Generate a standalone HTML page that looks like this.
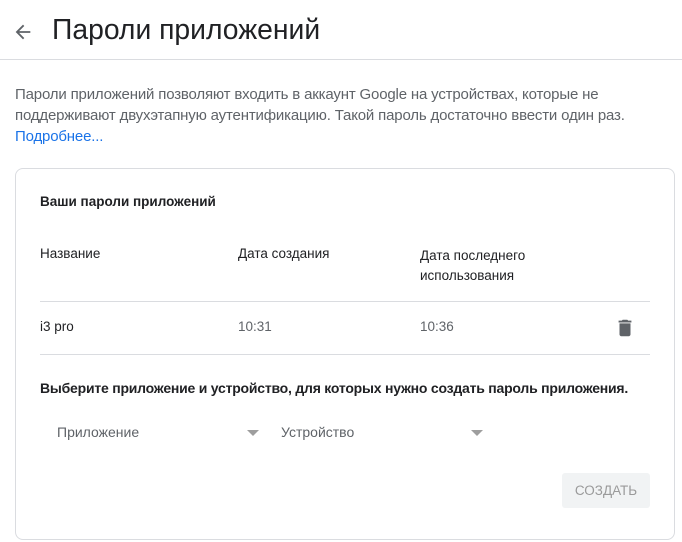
<!DOCTYPE html>
<html><head><meta charset="utf-8"><style>
body{margin:0;width:682px;height:542px;background:#fff;font-family:"Liberation Sans",Arial,sans-serif;color:#202124;position:relative;overflow:hidden}
.a{position:absolute;white-space:nowrap}
.s{font-size:13.5px;color:#5f6368}
.t{font-size:13.5px;color:#202124}
.arr{position:absolute;width:0;height:0;border-left:6px solid transparent;border-right:6px solid transparent;border-top:6px solid #9e9e9e}
</style></head><body>
<svg class="a" style="left:12px;top:21px" width="22" height="22" viewBox="0 0 24 24"><path d="M20 11H7.8l5.6-5.6L12 4l-8 8 8 8 1.4-1.4L7.8 13H20z" fill="#5f6368"/></svg>
<div class="a" style="left:52px;top:13px;font-size:28.3px;color:#202124">Пароли приложений</div>
<div class="a" style="left:0;top:59px;width:682px;height:1px;background:#dadce0"></div>
<div class="a s" style="left:15px;top:84px;line-height:21px;font-size:15px;letter-spacing:-0.17px">Пароли приложений позволяют входить в аккаунт Google на устройствах, которые не<br>поддерживают двухэтапную аутентификацию. Такой пароль достаточно ввести один раз.<br><span style="color:#1a73e8">Подробнее...</span></div>
<div class="a" style="left:15px;top:168px;width:658px;height:370px;border:1px solid #dadce0;border-radius:8px"></div>
<div class="a t" style="left:40px;top:194px;font-size:13.5px;font-weight:600">Ваши пароли приложений</div>
<div class="a t" style="left:40px;top:246px">Название</div>
<div class="a t" style="left:238px;top:246px">Дата создания</div>
<div class="a t" style="left:420px;top:246px;line-height:20px">Дата последнего<br>использования</div>
<div class="a" style="left:40px;top:301px;width:610px;height:1px;background:#dadce0"></div>
<div class="a t" style="left:40px;top:319px">i3 pro</div>
<div class="a s" style="left:238px;top:319px">10:31</div>
<div class="a s" style="left:420px;top:319px">10:36</div>
<svg class="a" style="left:614px;top:317px" width="22" height="22" viewBox="0 0 24 24"><path d="M6 19c0 1.1.9 2 2 2h8c1.1 0 2-.9 2-2V7H6v12zM19 4h-3.5l-1-1h-5l-1 1H5v2h14V4z" fill="#5f6368"/></svg>
<div class="a" style="left:40px;top:354px;width:610px;height:1px;background:#dadce0"></div>
<div class="a t" style="left:40px;top:380px;font-size:14px;font-weight:600;letter-spacing:-0.22px">Выберите приложение и устройство, для которых нужно создать пароль приложения.</div>
<div class="a s" style="left:57px;top:424px;font-size:14px">Приложение</div>
<div class="arr" style="left:247px;top:430px"></div>
<div class="a s" style="left:281px;top:424px;font-size:14px">Устройство</div>
<div class="arr" style="left:471px;top:430px"></div>
<div class="a" style="left:562px;top:473px;width:88px;height:35px;background:#f1f3f4;border-radius:3px;color:#9a9a9a;font-size:13.5px;text-align:center;line-height:35px">СОЗДАТЬ</div>
</body></html>
